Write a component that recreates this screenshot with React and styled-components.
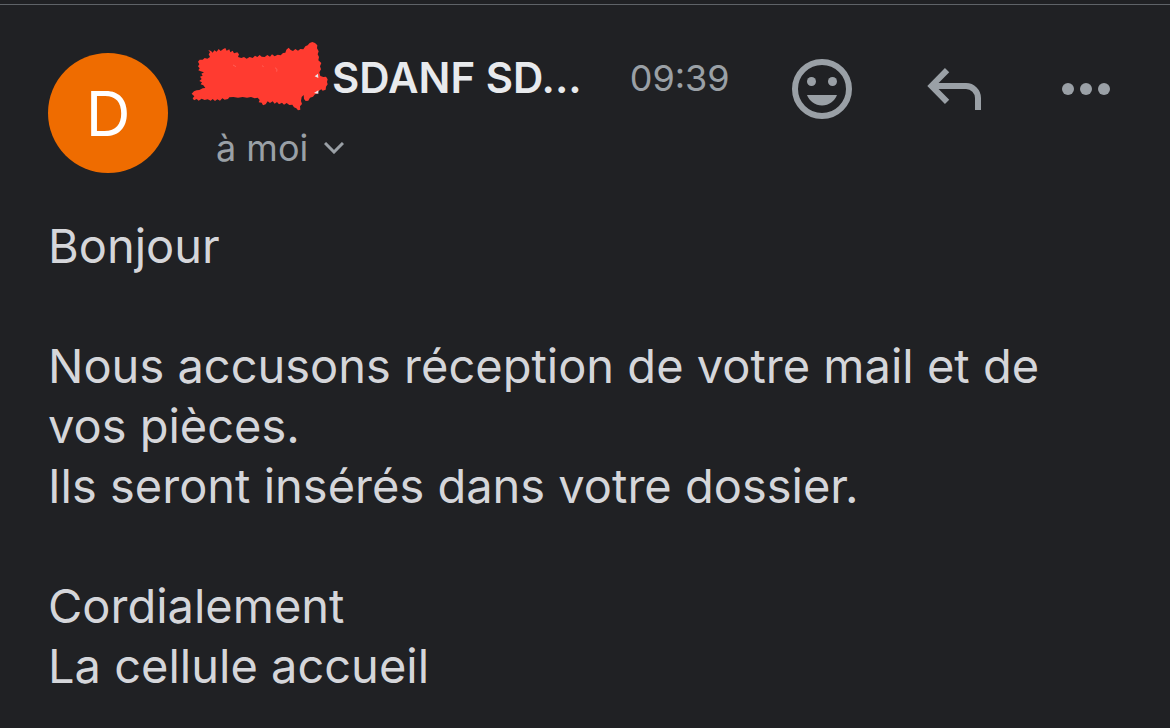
import React from 'react';
import styled, { createGlobalStyle } from 'styled-components';

const GlobalStyle = createGlobalStyle`
  * {
    box-sizing: border-box;
  }

  body {
    margin: 0;
    background: #202124;
    font-family: Inter, 'Liberation Sans', sans-serif;
  }
`;

const Page = styled.main`
  min-height: 100vh;
  padding-top: 4px;
  background: #202124;
`;

const Message = styled.article`
  border-top: 1px solid #5f6368;
  padding: 48px 48px 24px;
`;

const Header = styled.header`
  display: flex;
  align-items: flex-start;
`;

const Avatar = styled.div`
  display: flex;
  align-items: center;
  justify-content: center;
  flex: none;
  width: 120px;
  height: 120px;
  border-radius: 50%;
  background: #ef6c00;
  color: #fff;
  font-size: 62px;
  font-weight: 400;
`;

const Details = styled.div`
  display: flex;
  flex: 1;
  flex-direction: column;
  gap: 21px;
  margin-left: 48px;
`;

const SenderRow = styled.div`
  display: flex;
  align-items: center;
  gap: 48px;
  white-space: nowrap;
`;

const Sender = styled.h1`
  display: flex;
  margin: 0;
  color: #e8eaed;
  font-size: 42px;
  font-weight: 600;
  line-height: 50px;
`;

const Redacted = styled.span`
  position: relative;
  width: 116px;
`;

const Scribble = styled.svg`
  position: absolute;
  top: -12px;
  left: -26px;
  width: 140px;
  height: 70px;
`;

const Time = styled.time`
  color: #9aa0a6;
  font-size: 36px;
  line-height: 50px;
`;

const Recipient = styled.button`
  display: flex;
  align-items: center;
  align-self: flex-start;
  gap: 16px;
  padding: 0;
  border: 0;
  background: none;
  color: #9aa0a6;
  font-family: inherit;
  font-size: 36px;
  line-height: 48px;
  cursor: pointer;
`;

const Chevron = styled.svg`
  width: 20px;
  height: 12px;
`;

const Actions = styled.div`
  display: flex;
  gap: 60px;
`;

const IconButton = styled.button`
  width: 72px;
  height: 72px;
  padding: 0;
  border: 0;
  background: none;
  color: #9aa0a6;
  cursor: pointer;

  svg {
    display: block;
    width: 100%;
    height: 100%;
  }
`;

const Body = styled.div`
  display: flex;
  flex-direction: column;
  gap: 60px;
  margin-top: 43px;
  padding-right: 24px;
  color: #d5d6da;
  font-size: 47px;
  line-height: 60px;
`;

const Paragraph = styled.p`
  margin: 0;
`;

const MoodIcon = () => (
  <svg viewBox="0 0 24 24" fill="currentColor" aria-hidden="true">
    <circle cx="12" cy="12" r="9" fill="none" stroke="currentColor" strokeWidth="2" />
    <circle cx="8.5" cy="9.5" r="1.5" />
    <circle cx="15.5" cy="9.5" r="1.5" />
    <path d="M7 14h10c-.8 2.1-2.7 3.5-5 3.5S7.800 16.100 7 14z" />
  </svg>
);

const ReplyIcon = () => (
  <svg viewBox="0 0 24 24" fill="none" stroke="currentColor" strokeWidth="2" aria-hidden="true">
    <path d="M9.700 5.700 4.500 11l5.200 5.300" />
    <path d="M4.500 11H16a4 4 0 0 1 4 4v4" />
  </svg>
);

const MoreIcon = () => (
  <svg viewBox="0 0 24 24" fill="currentColor" aria-hidden="true">
    <circle cx="6" cy="12" r="2" />
    <circle cx="12" cy="12" r="2" />
    <circle cx="18" cy="12" r="2" />
  </svg>
);

const actions = [
  { label: 'Ajouter une réaction', Icon: MoodIcon },
  { label: 'Répondre', Icon: ReplyIcon },
  { label: "Plus d'options", Icon: MoreIcon },
];

const App = () => {
  return (
    <Page>
      <GlobalStyle />
      <Message>
        <Header>
          <Avatar>D</Avatar>
          <Details>
            <SenderRow>
              <Sender>
                <Redacted>
                  <Scribble viewBox="30 30 420 210" aria-hidden="true">
                    <path
                      fill="#ff3b30"
                      d="M35 188 42 181 50 178 58 177 68 172 76 171 70 163 62 160 66 154 58 150 65 144 60 137 68 134 64 128 72 124 62 121 55 118 59 112 54 106 58 100 54 92 59 86 68 86 74 81 82 83 90 78 86 70 90 64 85 57 93 60 98 65 103 58 110 62 116 54 122 60 130 54 136 51 140 59 148 55 151 64 158 59 162 67 172 64 177 70 174 78 184 81 192 78 200 83 209 78 218 81 225 74 232 78 239 72 245 77 254 78 262 72 270 77 276 70 284 76 293 71 302 73 309 66 316 65 319 56 326 50 332 57 339 60 346 54 354 59 361 54 370 55 376 46 383 43 389 36 397 33 405 36 412 43 411 52 416 61 413 70 417 78 415 88 424 96 420 106 423 115 418 124 421 135 430 138 438 137 443 145 441 153 443 160 438 167 437 176 428 179 424 175 416 180 412 188 405 190 399 197 390 200 385 209 377 210 372 204 371 192 365 198 363 210 366 219 360 226 361 236 354 238 349 232 342 229 337 221 328 222 320 216 312 221 306 215 297 220 291 213 284 218 278 211 270 216 263 211 257 220 249 223 245 215 236 214 239 207 233 200 224 202 213 198 201 200 188 198 174 200 160 198 148 199 144 204 134 206 127 202 120 209 112 205 105 210 98 204 92 209 83 205 74 207 65 203 56 209 50 204 42 208 38 202 43 196z"
                    />
                    <path fill="#e8eaed" d="M404 136l10-8 1 13zM402 186l13-8v10z" />
                    <path
                      fill="none"
                      stroke="#ff7068"
                      strokeWidth="2"
                      d="M159 102l9 5M285 110l6 5-1 7M246 104l5 3"
                    />
                  </Scribble>
                </Redacted>
                SDANF SD...
              </Sender>
              <Time dateTime="09:39">09:39</Time>
            </SenderRow>
            <Recipient type="button">
              à moi
              <Chevron viewBox="0 0 20 12" aria-hidden="true">
                <path d="M1 1l9 9 9-9" fill="none" stroke="currentColor" strokeWidth="3" />
              </Chevron>
            </Recipient>
          </Details>
          <Actions>
            {actions.map(({ label, Icon }) => (
              <IconButton key={label} type="button" aria-label={label}>
                <Icon />
              </IconButton>
            ))}
          </Actions>
        </Header>
        <Body>
          <Paragraph>Bonjour</Paragraph>
          <Paragraph>
            Nous accusons réception de votre mail et de vos pièces.
            <br />
            Ils seront insérés dans votre dossier.
          </Paragraph>
          <Paragraph>
            Cordialement
            <br />
            La cellule accueil
          </Paragraph>
        </Body>
      </Message>
    </Page>
  );
};

export default App;
